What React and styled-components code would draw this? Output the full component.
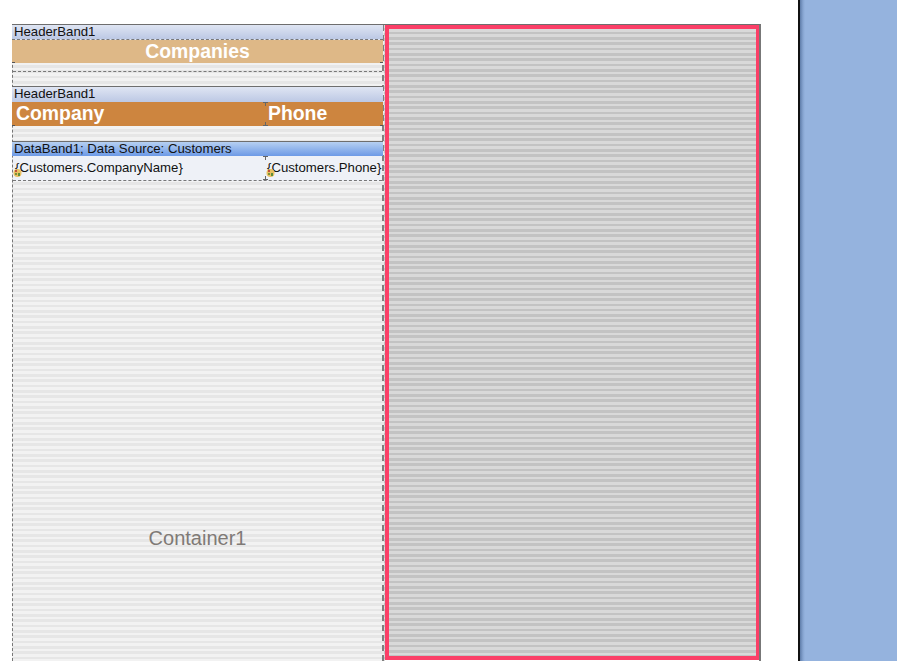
import React from "react";
import styled, { createGlobalStyle } from "styled-components";

const panelStripes = "repeating-linear-gradient(180deg, #d9d9d9 0, #d9d9d9 2.67px, #c3c3c3 2.67px, #c3c3c3 5.33px)";

const GlobalStyle = createGlobalStyle`
  html, body {
    margin: 0;
    padding: 0;
    height: 100%;
    overflow: hidden;
    background: #fff;
    font-family: "Liberation Sans", Arial, sans-serif;
  }
`;

const Workspace = styled.div`
  display: flex;
  width: 897px;
  height: 661px;
  overflow: hidden;
`;

const Sheet = styled.div`
  width: 798px;
  height: 661px;
  padding: 24px 0 0 12px;
  box-sizing: border-box;
  background: #fff;
`;

const Backdrop = styled.div`
  flex: 1;
  border-left: 2px solid #111;
  background: linear-gradient(90deg, #5f7da9 0, #86a4d0 3px, #95b3de 5px);
`;

const Page = styled.div`
  display: flex;
  width: 749px;
  height: 637px;
  box-sizing: border-box;
  border-top: 1px solid #6e6e6e;
  border-right: 2px solid #777;
`;

const LeftColumn = styled.div`
  position: relative;
  display: flex;
  flex-direction: column;
  width: 372px;
  flex: none;
  box-sizing: border-box;
  border-left: 1px dashed #777;
  border-right: 2px dashed #808080;
  background: repeating-linear-gradient(180deg, #f2f2f2 0, #f2f2f2 2.67px, #e6e6e6 2.67px, #e6e6e6 5.33px);
`;

const BandTitle = styled.div`
  height: ${(p) => p.$height}px;
  margin: 0 -1px;
  line-height: 14px;
  padding-left: 2px;
  box-sizing: border-box;
  font-size: 13.2px;
  color: #111;
  white-space: nowrap;
  border-top: ${(p) => (p.$first ? "0" : "1px solid #6e6e6e")};
  border-bottom: ${(p) => (p.$first ? "1px dashed #777" : "0")};
  background: ${(p) =>
    p.$data
      ? "linear-gradient(180deg, #b6d0f2 0, #6d9ae6 100%)"
      : "linear-gradient(180deg, #dfe5f3 0, #bcc8e4 100%)"};
`;

const TitleBand = styled.div`
  position: relative;
  height: 23px;
  margin: 0 -1px;
  line-height: 23px;
  text-align: center;
  font-size: 19.4px;
  font-weight: 700;
  color: #fff;
  background: #deb887;
`;

const HeaderBand = styled.div`
  position: relative;
  display: flex;
  height: 24px;
  margin: 0 -1px;
  background: #cd853f;
`;

const HeaderCell = styled.div`
  position: relative;
  width: ${(p) => p.$width}px;
  padding-left: ${(p) => p.$pad}px;
  box-sizing: border-box;
  line-height: 23px;
  font-size: 19.4px;
  font-weight: 700;
  color: #fff;
`;

const DataBand = styled.div`
  position: relative;
  display: flex;
  height: 25px;
  box-sizing: border-box;
  border-bottom: 1px dashed #777;
  background: #eef1f7;
`;

const DataCell = styled.div`
  position: relative;
  width: ${(p) => p.$width}px;
  padding-left: 2px;
  box-sizing: border-box;
  line-height: 23px;
  font-size: 13.2px;
  color: #111;
  white-space: nowrap;
`;

const Spacer = styled.div`
  height: ${(p) => p.$height}px;
  flex: none;
  box-sizing: border-box;
  border-bottom: ${(p) => (p.$dashed ? "1px dashed #777" : "0")};
`;

/* little T shaped handle where two objects meet */
const Tick = styled.span`
  position: absolute;
  left: ${(p) => p.$left}px;
  ${(p) => (p.$bottom ? "bottom: 0;" : "top: 0;")}
  width: 1px;
  height: 4px;
  background: #666;

  &::before {
    content: "";
    position: absolute;
    left: -2px;
    ${(p) => (p.$bottom ? "bottom: 0;" : "top: 0;")}
    width: 5px;
    height: 1px;
    background: #666;
  }
`;

/* short mark at the lower corners of a band */
const CornerMark = styled.span`
  position: absolute;
  ${(p) => (p.$right ? "right: 0;" : "left: 0;")}
  bottom: 0;
  width: 3px;
  height: 1px;
  background: #555;
`;

const ContainerLabel = styled.div`
  position: absolute;
  left: 0;
  right: 0;
  top: 501px;
  text-align: center;
  font-size: 20px;
  line-height: 24px;
  color: #7f7a76;
`;

const Gutter = styled.div`
  width: 1px;
  flex: none;
  background: ${panelStripes};
`;

const RightPanel = styled.div`
  flex: 1;
  margin-bottom: 1px;
  box-sizing: border-box;
  border: solid #fb3f67;
  border-width: 4px 3px 4px 4px;
  background: ${panelStripes};
`;

const ExpressionIcon = ({ left }) => (
  <svg
    width="9"
    height="10"
    viewBox="0 0 9 10"
    style={{ position: "absolute", left, top: 12 }}
  >
    <circle cx="4.5" cy="5" r="4" fill="#e8c060" />
    <rect x="2" y="2" width="2" height="2" fill="#c0503c" />
    <rect x="5" y="5" width="2" height="3" fill="#5f8f3a" />
    <rect x="2" y="5" width="2" height="2" fill="#7d8f3a" />
  </svg>
);

export default function App() {
  return (
    <>
      <GlobalStyle />
      <Workspace>
        <Sheet>
          <Page>
            <LeftColumn>
              <BandTitle $first $height={15}>HeaderBand1</BandTitle>
              <TitleBand>
                Companies
                <CornerMark />
                <CornerMark $right />
              </TitleBand>
              <Spacer $height={9} $dashed />
              <Spacer $height={14} />
              <BandTitle $height={16}>HeaderBand1</BandTitle>
              <HeaderBand>
                <HeaderCell $width={253} $pad={4}>Company</HeaderCell>
                <HeaderCell $width={118} $pad={3}>
                  <Tick $left={0} />
                  <Tick $left={0} $bottom />
                  Phone
                </HeaderCell>
                <CornerMark />
                <CornerMark $right />
              </HeaderBand>
              <Spacer $height={15} />
              <BandTitle $data $height={15}>DataBand1; Data Source: Customers</BandTitle>
              <DataBand>
                <DataCell $width={252}>
                  <ExpressionIcon left={0} />
                  {"{Customers.CompanyName}"}
                </DataCell>
                <DataCell $width={117}>
                  <Tick $left={0} />
                  <Tick $left={0} $bottom />
                  <ExpressionIcon left={1} />
                  {"{Customers.Phone}"}
                </DataCell>
              </DataBand>
              <ContainerLabel>Container1</ContainerLabel>
            </LeftColumn>
            <Gutter />
            <RightPanel />
          </Page>
        </Sheet>
        <Backdrop />
      </Workspace>
    </>
  );
}
